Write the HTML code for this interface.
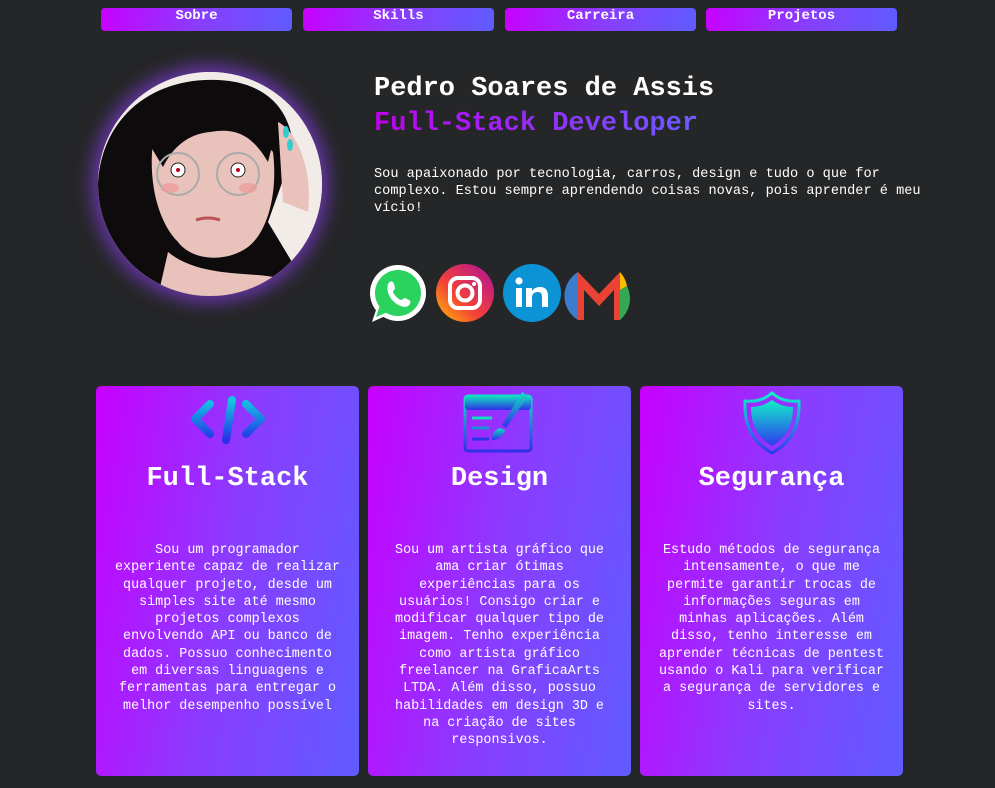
<!DOCTYPE html>
<html><head><meta charset="utf-8">
<style>
*{margin:0;padding:0;box-sizing:border-box}
body{width:995px;height:788px;background:#252627;font-family:"Liberation Mono","DejaVu Sans Mono",monospace;color:#fff;position:relative;overflow:hidden}
.g{background:linear-gradient(100deg,#c800ff 0%,#8a3cff 50%,#5f5cff 100%)}
.nav{position:absolute;top:8px;height:23px;width:191px;border-radius:4px;text-align:center;font-size:14px;line-height:17px;font-weight:bold}
.name{position:absolute;left:374px;top:72px;font-size:27px;font-weight:bold;line-height:34px}
.sub{position:absolute;left:374px;top:107px;font-size:27px;font-weight:bold;line-height:34px;background:linear-gradient(90deg,#c000f0,#6a5cff);-webkit-background-clip:text;background-clip:text;color:transparent}
.p{position:absolute;left:374px;top:166px;width:570px;font-size:13.6px;line-height:17px}
.card{position:absolute;top:386px;height:390px;width:263px;border-radius:5px;text-align:center}
.card h2{position:absolute;top:76px;left:0;right:0;font-size:27px;line-height:34px;font-weight:bold}
.card p{position:absolute;top:156px;left:16px;right:16px;font-size:13.4px;line-height:17.3px}
.card svg{position:absolute;left:50%;transform:translateX(-50%);top:8px}
.av{position:absolute;left:98px;top:72px;width:224px;height:224px;border-radius:50%;box-shadow:0 0 18px 6px rgba(130,60,220,.75);overflow:hidden;background:#e8c2bc}
</style></head><body>
<div class="nav g" style="left:101px">Sobre</div>
<div class="nav g" style="left:303px">Skills</div>
<div class="nav g" style="left:505px">Carreira</div>
<div class="nav g" style="left:706px">Projetos</div>

<div class="av"><svg width="224" height="224" viewBox="0 0 224 224">
<rect width="224" height="224" fill="#f2ece8"/>
<path d="M0 110 C5 40 60 5 120 8 C170 10 195 40 195 80 L170 150 L200 200 L224 224 L0 224 Z" fill="#0d0b0c"/>
<path d="M55 70 C80 50 150 50 175 80 C180 120 170 160 150 175 C130 190 95 190 80 170 C60 150 50 110 55 70Z" fill="#e9c3bb"/>
<path d="M50 70 C70 35 150 30 175 70 L170 90 C155 65 140 55 112 60 C90 62 75 75 65 95Z" fill="#0d0b0c"/>
<path d="M70 180 C100 205 150 200 175 205 L190 224 L60 224 Z" fill="#e9c3bb"/>
<path d="M180 50 C200 60 215 100 210 140 L185 130 Z" fill="#e9c3bb"/>
<circle cx="80" cy="102" r="21" fill="none" stroke="#aaa" stroke-width="2"/>
<circle cx="140" cy="102" r="21" fill="none" stroke="#aaa" stroke-width="2"/>
<circle cx="80" cy="98" r="7" fill="#fff" stroke="#222"/><circle cx="140" cy="98" r="7" fill="#fff" stroke="#222"/>
<circle cx="80" cy="98" r="2" fill="#b02"/><circle cx="140" cy="98" r="2" fill="#b02"/>
<ellipse cx="72" cy="116" rx="9" ry="5" fill="#e99" opacity=".7"/><ellipse cx="150" cy="116" rx="9" ry="5" fill="#e99" opacity=".7"/>
<path d="M98 148 Q110 144 122 148" stroke="#b55" stroke-width="3" fill="none"/>
<ellipse cx="188" cy="60" rx="3" ry="6" fill="#3cc"/><ellipse cx="192" cy="73" rx="3" ry="6" fill="#3cc"/>
</svg></div>

<div class="name">Pedro Soares de Assis</div>
<div class="sub">Full-Stack Developer</div>
<div class="p">Sou apaixonado por tecnologia, carros, design e tudo o que for complexo. Estou sempre aprendendo coisas novas, pois aprender é meu vício!</div>

<svg style="position:absolute;left:368px;top:264px" width="262" height="62" viewBox="0 0 262 62">
<circle cx="30" cy="29" r="28" fill="#fff"/>
<path d="M4 58 L10 40 L22 50Z" fill="#fff"/>
<circle cx="30" cy="29" r="23" fill="#2ad35e"/>
<path d="M8 53 L12 41 L20 48Z" fill="#2ad35e"/>
<path d="M20 20 C22 16 25 17 26 20 L27 24 C27 26 25 26 25 28 C27 32 30 35 33 36 C35 36 35 34 37 34 L41 36 C43 37 43 40 40 42 C33 46 16 34 20 20Z" fill="#fff"/>
<defs><linearGradient id="ig" x1="0" y1="1" x2="1" y2="0"><stop offset="0" stop-color="#ffc107"/><stop offset=".4" stop-color="#f44336"/><stop offset="1" stop-color="#b0109c"/></linearGradient></defs>
<circle cx="97" cy="29" r="29" fill="url(#ig)"/>
<rect x="82" y="14" width="30" height="30" rx="8" fill="none" stroke="#fff" stroke-width="4"/>
<circle cx="97" cy="29" r="7.5" fill="none" stroke="#fff" stroke-width="4"/>
<circle cx="106" cy="20" r="2" fill="#fff"/>
<circle cx="164" cy="29" r="29" fill="#0b93d6"/>
<rect x="148" y="24" width="6" height="19" fill="#fff"/><circle cx="151" cy="17" r="3.6" fill="#fff"/>
<path d="M158 24 H164 V27 C166 24 169 23 172 23 C178 23 180 27 180 32 V43 H174 V33 C174 30 173 28 170 28 C166 28 164 30 164 34 V43 H158Z" fill="#fff"/>
<path d="M210 8 A28 28 0 0 0 210 56Z" fill="#3b7ccc"/>
<path d="M210 8 L231 30 L252 8 L252 56 L246 56 L246 26 L231 42 L216 26 L216 56 L210 56Z" fill="#ea4335"/>
<path d="M252 8 A28 28 0 0 1 259 22 L252 26Z" fill="#fbbc04"/>
<path d="M252 26 L259 22 A28 28 0 0 1 252 56Z" fill="#34a853"/>
</svg>

<div class="card g" style="left:96px">
<svg width="76" height="60" viewBox="0 0 76 60"><defs><linearGradient id="c1" x1="0" y1="0" x2="0" y2="1"><stop offset="0" stop-color="#12c8e0"/><stop offset="1" stop-color="#2530e8"/></linearGradient></defs>
<path d="M20 10 L5 25 L20 40 M56 10 L71 25 L56 40 M42 6 L36 46" stroke="url(#c1)" stroke-width="8" stroke-linecap="round" stroke-linejoin="round" fill="none"/></svg>
<h2>Full-Stack</h2>
<p>Sou um programador experiente capaz de realizar qualquer projeto, desde um simples site até mesmo projetos complexos envolvendo API ou banco de dados. Possuo conhecimento em diversas linguagens e ferramentas para entregar o melhor desempenho possível</p></div>

<div class="card g" style="left:368px">
<svg width="76" height="64" viewBox="0 0 76 64" style="top:4px"><defs><linearGradient id="c2" x1="0" y1="0" x2="0" y2="1"><stop offset="0" stop-color="#10e0c0"/><stop offset="1" stop-color="#3030e8"/></linearGradient></defs>
<rect x="3" y="6" width="66" height="55" rx="3" fill="none" stroke="url(#c2)" stroke-width="3"/>
<rect x="3" y="6" width="66" height="14" rx="3" fill="url(#c2)"/>
<path d="M10 28 H30 M10 38 H27 M10 49 H27" stroke="url(#c2)" stroke-width="3"/>
<path d="M60 2 L66 6 L44 38 L40 35Z" fill="url(#c2)"/><path d="M38 38 C32 40 29 46 30 50 C36 50 42 46 43 40Z" fill="url(#c2)"/></svg>
<h2>Design</h2>
<p>Sou um artista gráfico que ama criar ótimas experiências para os usuários! Consigo criar e modificar qualquer tipo de imagem. Tenho experiência como artista gráfico freelancer na GraficaArts LTDA. Além disso, possuo habilidades em design 3D e na criação de sites responsivos.</p></div>

<div class="card g" style="left:640px">
<svg width="60" height="66" viewBox="0 0 60 66" style="top:4px"><defs><linearGradient id="c3" x1="0" y1="0" x2="0" y2="1"><stop offset="0" stop-color="#10f0c8"/><stop offset="1" stop-color="#3038f0"/></linearGradient></defs>
<path d="M30 3 C38 10 48 12 57 11 C58 35 50 52 30 63 C10 52 2 35 3 11 C12 12 22 10 30 3Z" fill="none" stroke="url(#c3)" stroke-width="3"/>
<path d="M30 10 C37 15 44 17 51 17 C51 36 44 48 30 56 C16 48 9 36 9 17 C16 17 23 15 30 10Z" fill="url(#c3)"/></svg>
<h2>Segurança</h2>
<p>Estudo métodos de segurança intensamente, o que me permite garantir trocas de informações seguras em minhas aplicações. Além disso, tenho interesse em aprender técnicas de pentest usando o Kali para verificar a segurança de servidores e sites.</p></div>
</body></html>
